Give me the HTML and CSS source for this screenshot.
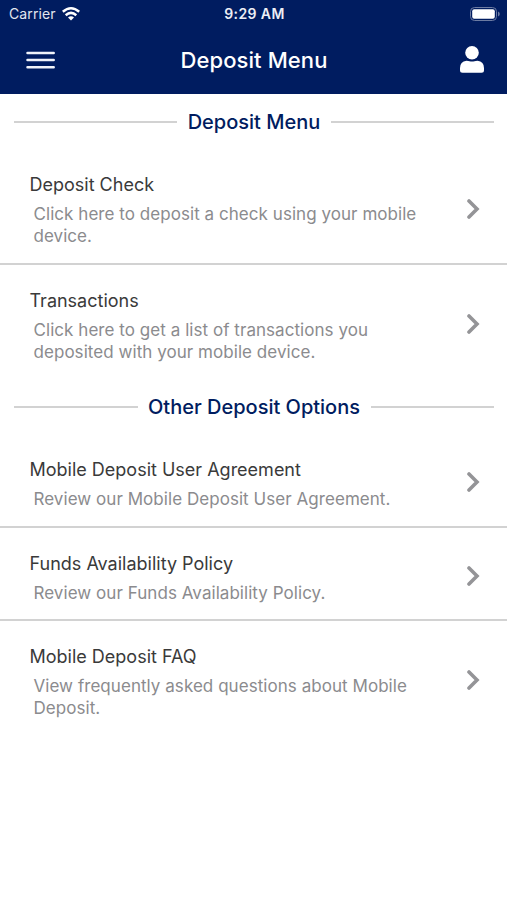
FILE: index.html
```html
<!DOCTYPE html>
<html lang="en">
<head>
<meta charset="utf-8">
<meta name="viewport" content="width=device-width, initial-scale=1">
<title>Deposit Menu</title>
<link rel="stylesheet" href="styles.css">
</head>
<body>
<header class="top">
  <div class="status">
    <div class="carrier"><span>Carrier</span>
      <svg viewBox="0 0 18 14" width="18" height="14"><g fill="none" stroke="#fff" stroke-width="2.5"><path d="M.8 4.8Q9-2.2 17.2 4.8"/><path d="M3.7 8.2Q9 3.5 14.3 8.2"/></g><path d="M6 10.4Q9 8 12 10.4L9 13.6Z" fill="#fff"/></svg>
    </div>
    <span class="time">9:29 AM</span>
    <svg class="battery" viewBox="0 0 30 14" width="30" height="14"><rect x=".5" y=".5" width="26" height="13" rx="4" fill="none" stroke="#6c7ba2"/><rect x="2.2" y="2.3" width="22.6" height="9.4" rx="2" fill="#fff"/><path d="M28 4.6Q29.8 5.3 29.8 7T28 9.4Z" fill="#6c7ba2"/></svg>
  </div>
  <div class="nav">
    <svg viewBox="0 0 30 18" width="30" height="18"><path d="M2.5 2H28.7M2.5 9.1H28.7M2.5 16.2H28.7" stroke="#f1f3fa" stroke-width="2.5" stroke-linecap="round"/></svg>
    <h1 class="title">Deposit Menu</h1>
    <svg class="user" viewBox="0 0 24 27" width="24" height="27"><circle cx="12" cy="6.8" r="6.8" fill="#fff"/><path d="M6.5 14.7Q8.5 14.7 9.5 15.2Q12 16 14.5 15.2Q15.5 14.7 17.5 14.7Q24 15.5 24 22V24.3Q24 26.8 21.5 26.8H2.5Q0 26.8 0 24.3V22Q0 15.5 6.5 14.7Z" fill="#fff"/></svg>
  </div>
</header>
<main>
  <h2 class="section"><span>Deposit Menu</span></h2>
  <a class="row tall"><div class="copy"><h3>Deposit Check</h3><p>Click here to deposit a check using your mobile<br>device.</p></div><svg class="chev" viewBox="0 0 14 20" width="14" height="20"><path d="M3 2L11 10L3 18"/></svg></a>
  <a class="row tall last"><div class="copy"><h3>Transactions</h3><p>Click here to get a list of transactions you<br>deposited with your mobile device.</p></div><svg class="chev" viewBox="0 0 14 20" width="14" height="20"><path d="M3 2L11 10L3 18"/></svg></a>
  <h2 class="section"><span>Other Deposit Options</span></h2>
  <a class="row"><div class="copy"><h3>Mobile Deposit User Agreement</h3><p>Review our Mobile Deposit User Agreement.</p></div><svg class="chev" viewBox="0 0 14 20" width="14" height="20"><path d="M3 2L11 10L3 18"/></svg></a>
  <a class="row"><div class="copy"><h3>Funds Availability Policy</h3><p>Review our Funds Availability Policy.</p></div><svg class="chev" viewBox="0 0 14 20" width="14" height="20"><path d="M3 2L11 10L3 18"/></svg></a>
  <a class="row tall last"><div class="copy"><h3>Mobile Deposit FAQ</h3><p>View frequently asked questions about Mobile<br>Deposit.</p></div><svg class="chev" viewBox="0 0 14 20" width="14" height="20"><path d="M3 2L11 10L3 18"/></svg></a>
</main>
</body>
</html>
```
FILE: styles.css
```css
* { box-sizing: border-box; }
body { margin: 0; background: #fff; font-family: Inter, "Liberation Sans", sans-serif; }
h1, h2, h3, p { margin: 0; font-weight: 400; }
svg { display: block; flex: none; }
.top { height: 94px; background: #001c60; color: #fff; }
.status { height: 27px; padding: 0 7px 0 9px; display: grid; grid-template-columns: 1fr auto 1fr; align-items: center; font-size: 14px; }
.carrier { display: flex; align-items: center; gap: 6px; color: #e3e6ef; letter-spacing: .1px; }
.time { font-weight: 600; font-size: 14px; letter-spacing: .4px; color: #eceef5; }
.battery { justify-self: end; }
.nav { height: 66px; padding: 0 23px 0 25px; display: grid; grid-template-columns: 1fr auto 1fr; align-items: center; }
.title { font-size: 22px; font-weight: 500; line-height: 28px; letter-spacing: .1px; margin-right: 1px; }
.user { justify-self: end; margin-bottom: 2px; }
.section { height: 55px; padding: 0 13px 0 14px; display: flex; align-items: center; gap: 10.5px; color: #001c60; font-size: 20px; font-weight: 500; line-height: 24px; }
.section::before, .section::after { content: ""; flex: 1; height: 2px; background: #d2d2d2; }
.row { height: 93px; padding: 19.4px 27px 0 29.5px; display: flex; justify-content: space-between; border-bottom: 2px solid #d2d2d2; }
.row + .row { padding-top: 20px; }
.row.tall { height: 115.5px; padding-top: 20px; }
.row.last { border-bottom: 0; height: 115px; }
h3 { color: #3a3a3a; font-size: 18px; line-height: 32px; }
p { margin-top: 2px; padding-left: 4px; color: #8b8b8e; font-size: 17px; line-height: 22px; letter-spacing: .05px; white-space: nowrap; }
.chev { margin-top: 18.1px; fill: none; stroke: #949497; stroke-width: 3.6; stroke-linecap: round; }
.tall .chev { margin-top: 29.8px; }
```
